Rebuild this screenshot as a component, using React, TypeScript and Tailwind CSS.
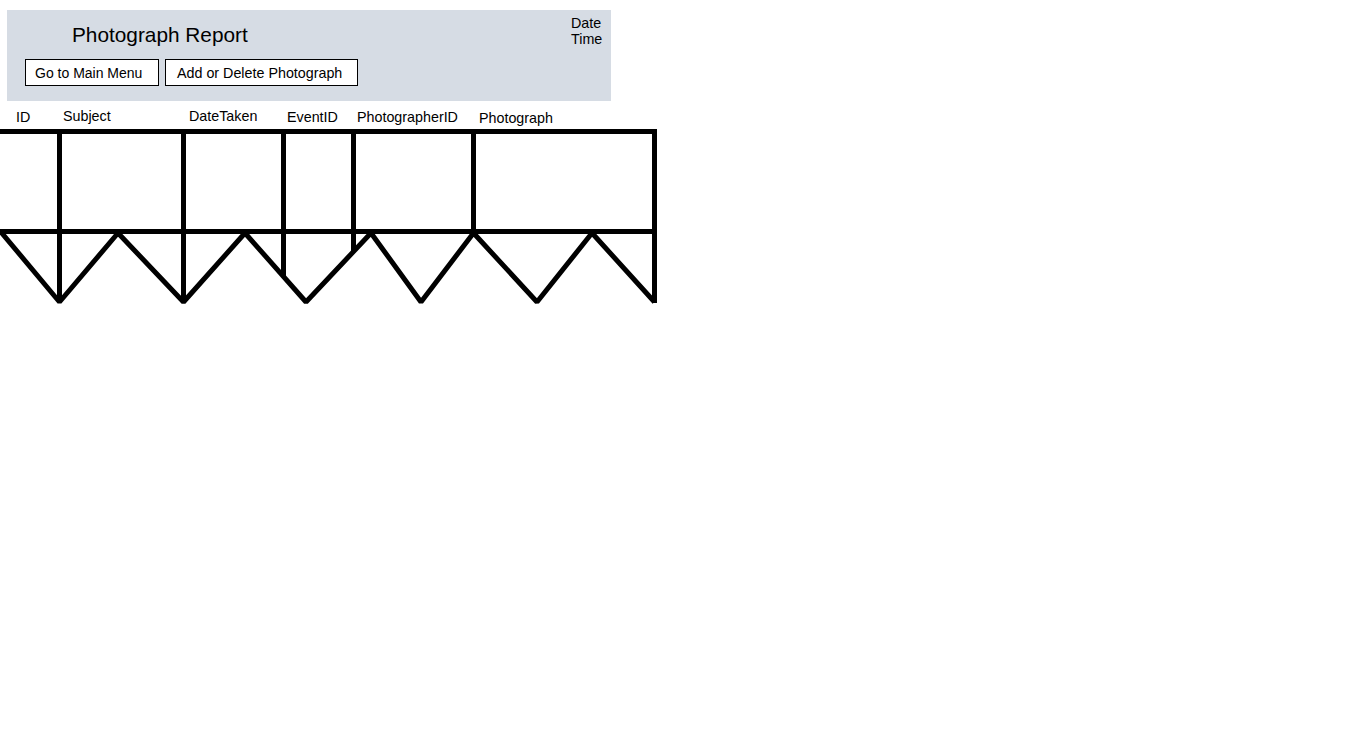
const columns = [
  { label: "ID", w: "w-[47px]", ml: "ml-[16px]", mt: "mt-[1px]" },
  { label: "Subject", w: "w-[126px]", ml: "", mt: "mt-0" },
  { label: "DateTaken", w: "w-[98px]", ml: "", mt: "mt-0" },
  { label: "EventID", w: "w-[70px]", ml: "", mt: "mt-[1px]" },
  { label: "PhotographerID", w: "w-[122px]", ml: "", mt: "mt-[1px]" },
  { label: "Photograph", w: "w-[120px]", ml: "", mt: "mt-[2px]" },
];

function TornEdge() {
  // sketchy zigzag under the row, coordinates are page x / (y - 234)
  const pts = "1,-2 59.5,68 118,-1 183.5,68 245,-1 306,68 371,-1 421,68 473.5,-1 537,68 592,-1 654.5,68";
  return (
    <svg width="660" height="72" className="block overflow-visible" viewBox="0 0 660 72">
      <g stroke="#000" strokeWidth="5" fill="none" strokeLinejoin="bevel">
        <polyline points={pts} />
        <line x1="59.5" y1="-2" x2="59.5" y2="68" />
        <line x1="183.5" y1="-2" x2="183.5" y2="66" />
        <line x1="283.5" y1="-2" x2="283.5" y2="43" />
        <line x1="353.5" y1="-2" x2="353.5" y2="18" />
        <line x1="654.5" y1="-2" x2="654.5" y2="69" />
      </g>
    </svg>
  );
}

export default function App() {
  return (
    <div className="min-h-screen bg-white text-black font-['Liberation_Sans',Arial,sans-serif]">
      <div className="pt-[10px] pl-[7px]">
        <div className="flex justify-between w-[604px] h-[91px] bg-[#d6dce4]">
          <div className="flex flex-col">
            <h1 className="ml-[65px] mt-[13px] text-[20.8px] leading-[24px] font-normal">Photograph Report</h1>
            <div className="flex gap-[6px] ml-[18px] mt-[12px]">
              <button className="w-[134px] h-[27px] border border-black bg-white text-left pl-[9px] text-[14px] leading-[16px]">
                Go to Main Menu
              </button>
              <button className="w-[193px] h-[27px] border border-black bg-white text-left pl-[11px] text-[14.3px] leading-[16px]">
                Add or Delete Photograph
              </button>
            </div>
          </div>
          <div className="mt-[5px] mr-[7px] w-[33px] text-[14.3px] leading-[16px]">
            <div>Date</div>
            <div>Time</div>
          </div>
        </div>
      </div>

      <div className="flex h-[28px] pt-[7px] text-[14.3px] leading-[16px]">
        {columns.map((c) => (
          <div key={c.label} className={`${c.w} ${c.ml} ${c.mt}`}>
            {c.label}
          </div>
        ))}
      </div>

      <div className="flex w-[657px] h-[105px] border-t-[5px] border-b-[5px] border-r-[5px] border-black">
        <div className="w-[62px] border-r-[5px] border-black" />
        <div className="w-[124px] border-r-[5px] border-black" />
        <div className="w-[100px] border-r-[5px] border-black" />
        <div className="w-[70px] border-r-[5px] border-black" />
        <div className="w-[120px] border-r-[5px] border-black" />
        <div className="flex-1" />
      </div>
      <TornEdge />
    </div>
  );
}
